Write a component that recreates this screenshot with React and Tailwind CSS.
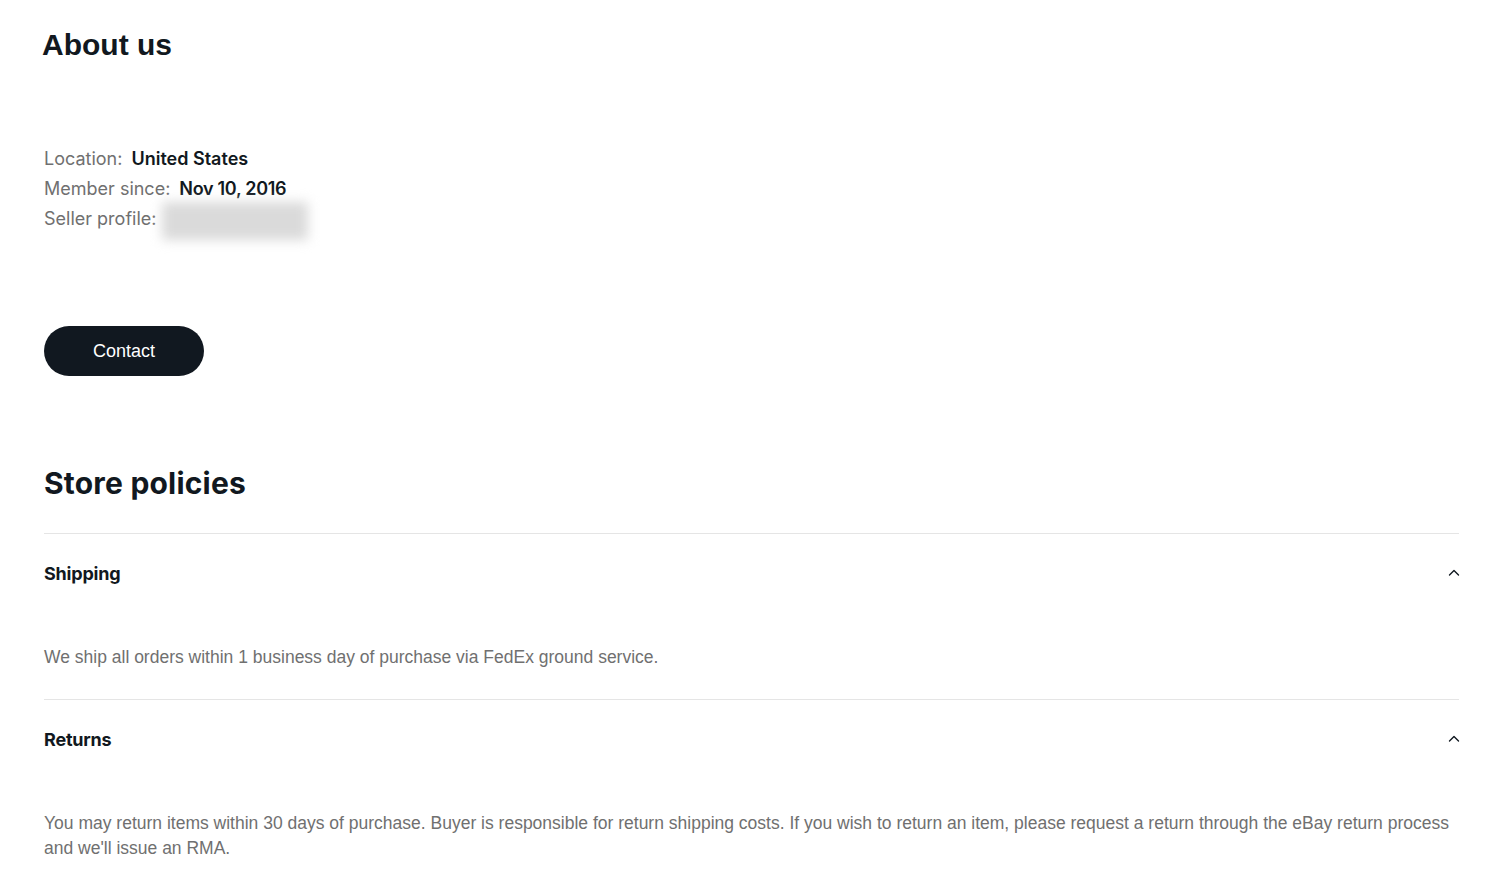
import React from "react";

const Chevron = () => (
  <svg width="12" height="12" viewBox="0 0 12 12" fill="none" className="shrink-0 -mr-[1px]">
    <path d="M1.5 8 L6 3.5 L10.5 8" stroke="#111820" strokeWidth="1.4" strokeLinecap="round" strokeLinejoin="round" />
  </svg>
);

const Section = ({ title, children }) => (
  <div className="border-t border-[#e5e5e5]">
    <div className="h-[78px] flex items-center justify-between">
      <span className="text-[18px] font-bold text-[#111820] font-['Inter',sans-serif] tracking-[-0.2px]">{title}</span>
      <Chevron />
    </div>
    <div className="pt-[33px] pb-[29px] pr-[10px] text-[17.5px] leading-[25px] text-[#707070] font-['Liberation_Sans',Arial,sans-serif]">
      {children}
    </div>
  </div>
);

export default function App() {
  return (
    <div className="min-h-screen bg-white pl-[44px] pr-[35px] pt-[27px]">
      <h1 className="-ml-[2px] text-[30px] leading-[36px] font-bold text-[#111820] font-['Liberation_Sans',Arial,sans-serif]">
        About us
      </h1>
      <div className="mt-[81px] text-[18px] leading-[30px] font-['Inter',sans-serif]">
        <div className="flex items-center">
          <span className="text-[#707070]">Location:</span>
          <span className="ml-[9px] font-semibold text-[#111820]">United States</span>
        </div>
        <div className="flex items-center">
          <span className="text-[#707070]">Member since:</span>
          <span className="ml-[9px] font-semibold text-[#111820] tracking-[-0.3px]">Nov 10, 2016</span>
        </div>
        <div className="flex items-center">
          <span className="text-[#707070]">Seller profile:</span>
          <span className="ml-[6px] relative inline-block w-[146px] h-[30px]">
            <span className="absolute left-0 right-0 -top-[2px] -bottom-[6px] bg-[#dadada] blur-[6px]"></span>
          </span>
        </div>
      </div>
      <button className="mt-[92px] w-[160px] h-[50px] rounded-full bg-[#111820] text-white text-[18px] font-['Liberation_Sans',Arial,sans-serif] flex items-center justify-center">
        Contact
      </button>
      <h2 className="mt-[89px] text-[30px] leading-[36px] font-bold text-[#111820] font-['Inter',sans-serif] tracking-[0.2px]">
        Store policies
      </h2>
      <div className="mt-[32px]">
        <Section title="Shipping">
          We ship all orders within 1 business day of purchase via FedEx ground service.
        </Section>
        <Section title="Returns">
          You may return items within 30 days of purchase. Buyer is responsible for return shipping costs. If you wish to return an item, please request a return through the eBay return process and we'll issue an RMA.
        </Section>
      </div>
    </div>
  );
}
